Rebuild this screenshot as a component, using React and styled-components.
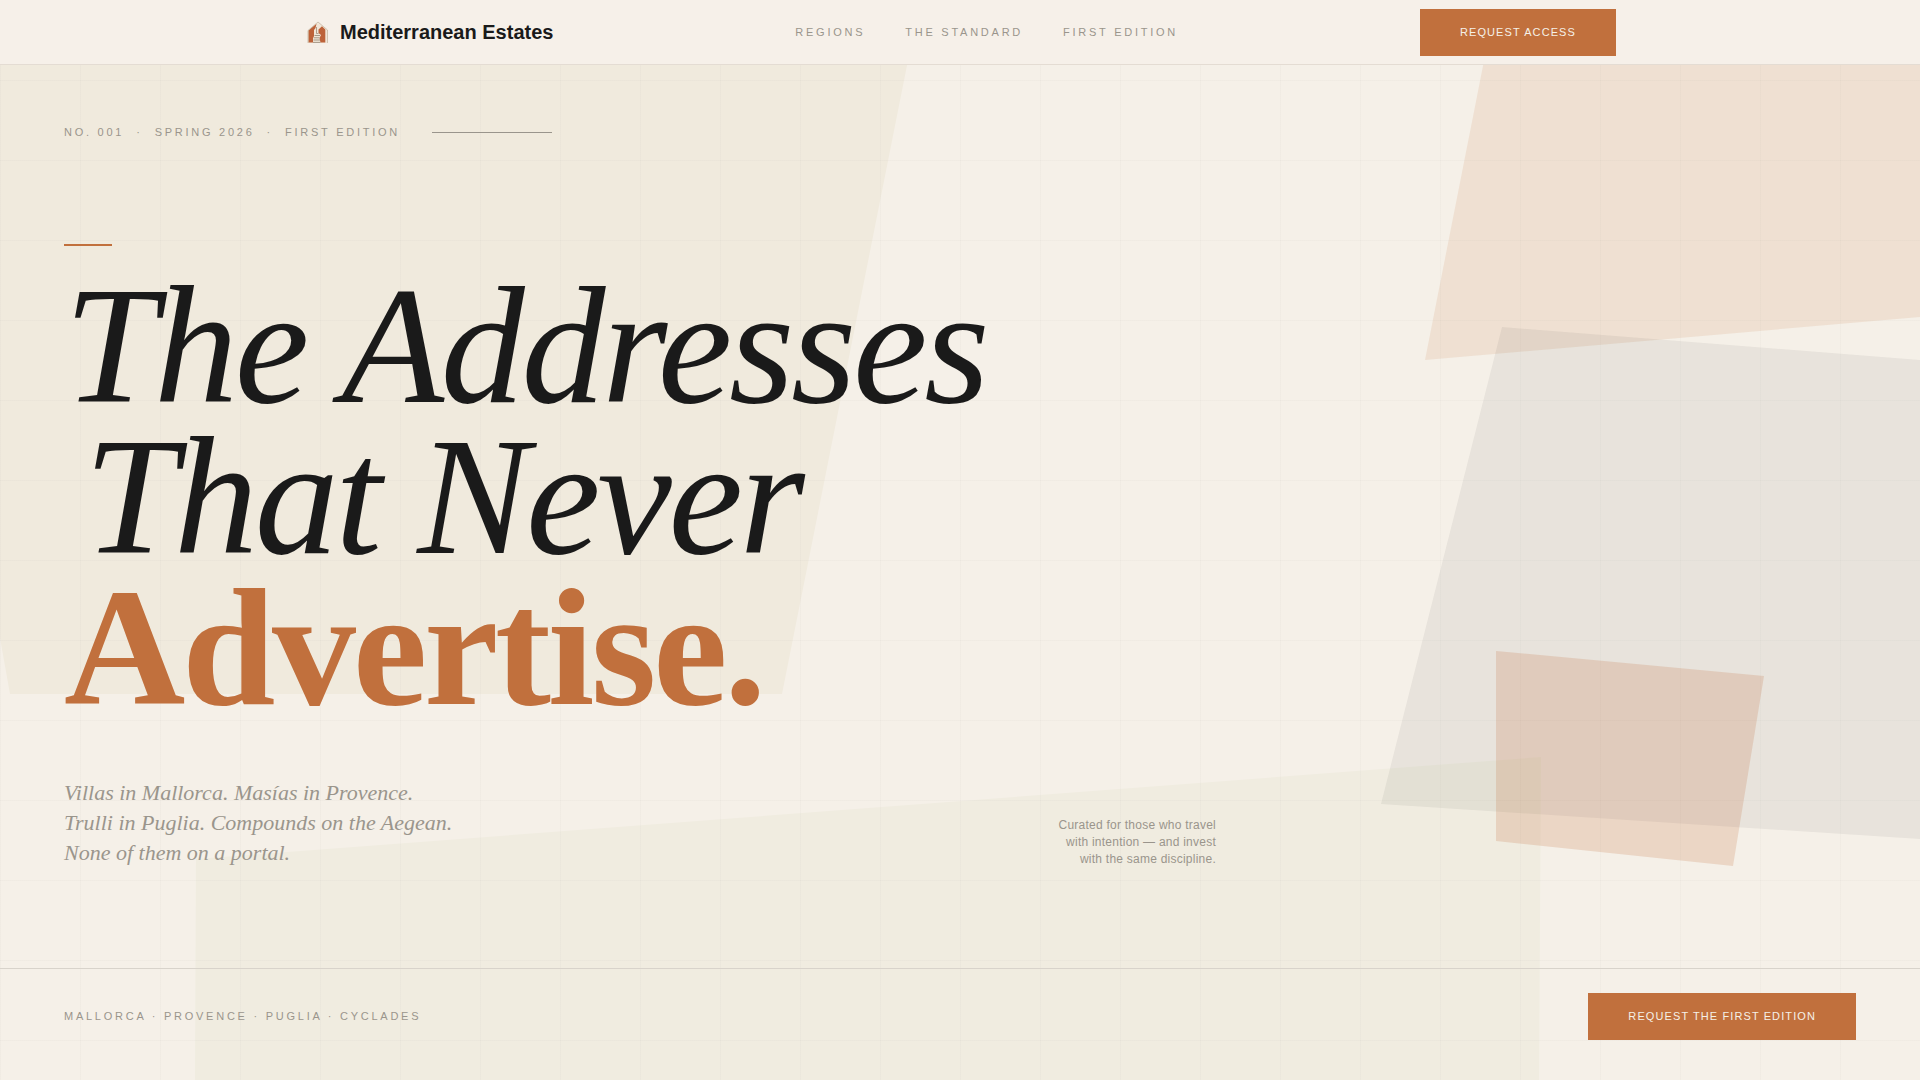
import React from 'react';
import styled, { createGlobalStyle } from 'styled-components';

const GlobalStyle = createGlobalStyle`
  * {
    box-sizing: border-box;
  }
  body {
    margin: 0;
    background: #f5f0e8;
    color: #1a1a1a;
    font-family: "Liberation Sans", Arial, sans-serif;
  }
`;

const regions = ['Mallorca', 'Provence', 'Puglia', 'Cyclades'];

const navLinks = [
  { label: 'Regions', href: '#regions' },
  { label: 'The Standard', href: '#standard' },
  { label: 'First Edition', href: '#edition' },
];

function HouseMark() {
  return (
    <Mark viewBox="0 0 24 24" aria-hidden="true">
      <path d="M4 10.5 L14 2 L23.5 10 V23 H4 Z" fill="#f1e6d8" />
      <path d="M4.5 10.5 L12.5 3.8 L11.5 8 L10 10 V16 L9 18.5 V22.5 H4.5 Z" fill="#bd6239" />
      <path d="M14.5 9.5 L18 6.2 L21.3 9.5 V22.5 H16.5 L15.5 18 L17 15 L14.5 13 Z" fill="#bd6239" />
      <path d="M4 23 V10.5 L14 2 L23.5 10 V23" fill="none" stroke="#b7a791" strokeWidth="0.6" />
      <path d="M12.5 7 V13.5 H14.5" fill="none" stroke="#a08c78" strokeWidth="0.8" />
      <path d="M10.5 15.5 H16 M10 17.8 H15.5 M9.5 20 H16 M9 22.4 H16.5" stroke="#9c8f7d" strokeWidth="0.9" />
    </Mark>
  );
}

function Backdrop() {
  return (
    <Shapes viewBox="0 0 1920 1080" preserveAspectRatio="none" aria-hidden="true">
      <polygon points="0,0 920,0 782,694 10,694 0,638" fill="#f0eadd" />
      <polygon points="196,859 1541,757 1539,1080 195,1080" fill="#f0ece0" />
      <polygon points="1496,0 1920,0 1920,317 1425,360" fill="#c4703c" fillOpacity="0.12" />
      <polygon points="1502,327 1920,360 1920,839 1381,804" fill="#1a1a1a" fillOpacity="0.06" />
      <polygon points="1496,651 1764,676 1733,866 1496,841" fill="#c4703c" fillOpacity="0.2" />
    </Shapes>
  );
}

class App extends React.Component {
  render() {
    return (
      <Page>
        <GlobalStyle />
        <Backdrop />
        <GridLines />
        <Header>
          <HeaderInner>
            <Brand href="#top">
              <HouseMark />
              Mediterranean Estates
            </Brand>
            <Nav>
              {navLinks.map((link) => (
                <NavLink key={link.href} href={link.href}>{link.label}</NavLink>
              ))}
            </Nav>
            <CtaButton type="button">Request access</CtaButton>
          </HeaderInner>
        </Header>
        <Hero>
          <Eyebrow>
            <Issue>
              <Caption>No. 001</Caption>
              <Caption>·</Caption>
              <Caption>Spring 2026</Caption>
              <Caption>·</Caption>
              <Caption>First Edition</Caption>
            </Issue>
            <EyebrowRule />
          </Eyebrow>
          <AccentBar />
          <Headline>
            <Line>The Addresses</Line>
            <Line $indent>That Never</Line>
            <Strong>Advertise.</Strong>
          </Headline>
          <HeroNotes>
            <Lead>
              Villas in Mallorca. Masías in Provence.<br />
              Trulli in Puglia. Compounds on the Aegean.<br />
              None of them on a portal.
            </Lead>
            <Aside>
              Curated for those who travel<br />
              with intention — and invest<br />
              with the same discipline.
            </Aside>
          </HeroNotes>
        </Hero>
        <Footer>
          <Caption>{regions.join(' · ')}</Caption>
          <CtaButton type="button">Request the first edition</CtaButton>
        </Footer>
      </Page>
    );
  }
}

export default App;


const Page = styled.div`
  position: relative;
  display: flex;
  flex-direction: column;
  min-height: 100vh;
  overflow: hidden;
`;

const Shapes = styled.svg`
  position: absolute;
  inset: 0;
  width: 100%;
  height: 100%;
`;

const GridLines = styled.div`
  position: absolute;
  inset: 0;
  background-image:
    linear-gradient(rgba(26, 26, 26, 0.02) 1px, transparent 1px),
    linear-gradient(90deg, rgba(26, 26, 26, 0.02) 1px, transparent 1px);
  background-size: 80px 80px;
`;

const Header = styled.header`
  position: relative;
  background: #f6f0e9;
  border-bottom: 1px solid #e4dcd3;
`;

const HeaderInner = styled.div`
  display: flex;
  align-items: center;
  justify-content: space-between;
  max-width: 1440px;
  height: 64px;
  margin: 0 auto;
  padding: 0 64px;
`;

const Brand = styled.a`
  display: flex;
  align-items: center;
  gap: 12px;
  color: #1a1a1a;
  font-size: 20px;
  font-weight: 700;
  text-decoration: none;
`;

const Mark = styled.svg`
  width: 24px;
  height: 24px;
`;

const Nav = styled.nav`
  display: flex;
  gap: 40px;
`;

const NavLink = styled.a`
  color: #9a958c;
  font-size: 11px;
  line-height: 15px;
  letter-spacing: 0.25em;
  text-transform: uppercase;
  text-decoration: none;
  &:hover {
    color: #1a1a1a;
  }
`;

const CtaButton = styled.button`
  padding: 16px 40px;
  border: none;
  background: #c1703d;
  color: #f5f0e8;
  font-family: inherit;
  font-size: 11px;
  line-height: 15px;
  letter-spacing: 0.1em;
  text-transform: uppercase;
  cursor: pointer;
  &:hover {
    background: #a85e30;
  }
`;

const Hero = styled.main`
  position: relative;
  flex: 1;
  padding: 60px 64px 96px;
`;

const Eyebrow = styled.div`
  display: flex;
  align-items: center;
  gap: 32px;
`;

const Issue = styled.div`
  display: flex;
  gap: 12px;
`;

const Caption = styled.span`
  color: #9a958c;
  font-size: 11px;
  line-height: 15px;
  letter-spacing: 0.25em;
  text-transform: uppercase;
`;

const EyebrowRule = styled.span`
  width: 120px;
  height: 1px;
  background: #9a958c;
`;

const AccentBar = styled.div`
  width: 48px;
  height: 2px;
  margin: 104px 0 24px;
  background: #c1703d;
`;

const Headline = styled.h1`
  margin: 0;
  font-family: "Liberation Serif", "Times New Roman", serif;
  font-size: 168px;
  font-weight: 400;
  line-height: 151px;
  letter-spacing: -0.02em;
`;

const Line = styled.span`
  display: block;
  padding-left: ${(props) => (props.$indent ? '20px' : '0')};
  font-style: italic;
`;

const Strong = styled.strong`
  display: block;
  color: #c1703d;
  font-weight: 700;
`;

const HeroNotes = styled.div`
  display: flex;
  align-items: flex-end;
  justify-content: space-between;
  max-width: 1152px;
  margin-top: 55px;
`;

const Lead = styled.p`
  margin: 0;
  color: #9a958c;
  font-family: "Liberation Serif", "Times New Roman", serif;
  font-size: 22px;
  font-style: italic;
  line-height: 30px;
`;

const Aside = styled.p`
  margin: 0;
  color: #9a958c;
  font-size: 12px;
  line-height: 17px;
  letter-spacing: 0.02em;
  text-align: right;
`;

const Footer = styled.footer`
  position: relative;
  display: flex;
  align-items: center;
  justify-content: space-between;
  padding: 24px 64px 40px;
  border-top: 1px solid #d8d3cb;
`;
